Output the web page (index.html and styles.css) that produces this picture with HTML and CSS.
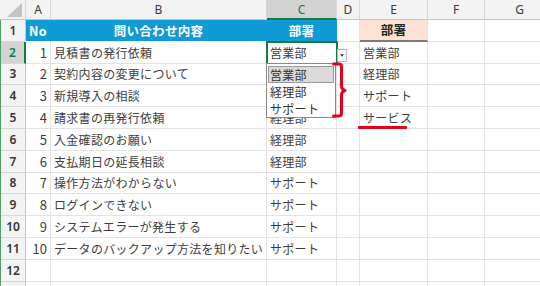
FILE: index.html
```html
<!DOCTYPE html>
<html lang="ja">
<head>
<meta charset="utf-8">
<link rel="stylesheet" href="styles.css">
</head>
<body>
<div class="wrap">
  <div class="sheet">
    <div class="corner"><svg width="24" height="20" viewBox="0 0 24 20"><polygon points="7,17 22,17 22,3" fill="#c4c4c4"/></svg></div>
    <div class="ch">A</div><div class="ch">B</div><div class="ch ch-sel">C</div><div class="ch">D</div><div class="ch">E</div><div class="ch">F</div><div class="ch">G</div>

    <div class="rh">1</div>
    <div class="c hd">No</div><div class="c hd ctr">問い合わせ内容</div><div class="c hd ctr">部署</div><div class="c"></div><div class="c hd2">部署</div><div class="c"></div><div class="c"></div>

    <div class="rh rh-sel">2</div>
    <div class="c num">1</div><div class="c">見積書の発行依頼</div><div class="c sel">営業部</div><div class="c"></div><div class="c">営業部</div><div class="c"></div><div class="c"></div>

    <div class="rh">3</div>
    <div class="c num">2</div><div class="c">契約内容の変更について</div><div class="c"></div><div class="c"></div><div class="c">経理部</div><div class="c"></div><div class="c"></div>

    <div class="rh">4</div>
    <div class="c num">3</div><div class="c">新規導入の相談</div><div class="c"></div><div class="c"></div><div class="c">サポート</div><div class="c"></div><div class="c"></div>

    <div class="rh">5</div>
    <div class="c num">4</div><div class="c">請求書の再発行依頼</div><div class="c">経理部</div><div class="c"></div><div class="c">サービス</div><div class="c"></div><div class="c"></div>

    <div class="rh">6</div>
    <div class="c num">5</div><div class="c">入金確認のお願い</div><div class="c">経理部</div><div class="c"></div><div class="c"></div><div class="c"></div><div class="c"></div>

    <div class="rh">7</div>
    <div class="c num">6</div><div class="c">支払期日の延長相談</div><div class="c">経理部</div><div class="c"></div><div class="c"></div><div class="c"></div><div class="c"></div>

    <div class="rh">8</div>
    <div class="c num">7</div><div class="c">操作方法がわからない</div><div class="c">サポート</div><div class="c"></div><div class="c"></div><div class="c"></div><div class="c"></div>

    <div class="rh">9</div>
    <div class="c num">8</div><div class="c">ログインできない</div><div class="c">サポート</div><div class="c"></div><div class="c"></div><div class="c"></div><div class="c"></div>

    <div class="rh">10</div>
    <div class="c num">9</div><div class="c">システムエラーが発生する</div><div class="c">サポート</div><div class="c"></div><div class="c"></div><div class="c"></div><div class="c"></div>

    <div class="rh">11</div>
    <div class="c num">10</div><div class="c">データのバックアップ方法を知りたい</div><div class="c">サポート</div><div class="c"></div><div class="c"></div><div class="c"></div><div class="c"></div>

    <div class="rh">12</div>
    <div class="c"></div><div class="c"></div><div class="c"></div><div class="c"></div><div class="c"></div><div class="c"></div><div class="c"></div>

    <div class="rh"></div>
    <div class="c"></div><div class="c"></div><div class="c"></div><div class="c"></div><div class="c"></div><div class="c"></div><div class="c"></div>
  </div>

  <div class="dd-btn"><svg width="9" height="5" viewBox="0 0 9 5"><polygon points="2,1 7,1 4.5,4" fill="#444"/></svg></div>
  <div class="dd-list">
    <div class="dd-item dd-hi">営業部</div>
    <div class="dd-item">経理部</div>
    <div class="dd-item">サポート</div>
  </div>
  <svg class="brace" width="16" height="58" viewBox="0 0 16 58">
    <path d="M1.5 2 H7 Q9.5 2 9.5 4.5 V24 Q9.5 27.5 13 28.5 Q9.5 29.5 9.5 33 V51.5 Q9.5 54 7 54 H1.5" fill="none" stroke="#e3001b" stroke-width="3" stroke-linecap="round" stroke-linejoin="round"/>
  </svg>
  <div class="uline"></div>
</div>
</body>
</html>
```

FILE: styles.css
```css
html, body {
  margin: 0;
  padding: 0;
  background: #ffffff;
}
body {
  width: 540px;
  height: 286px;
  overflow: hidden;
  font-family: "Noto Sans CJK JP", "Noto Sans", sans-serif;
}
.wrap {
  position: relative;
  width: 540px;
  height: 286px;
  overflow: hidden;
}
.sheet {
  display: grid;
  grid-template-columns: 25px 25px 216px 70px 23px 68px 57px 70px;
  grid-template-rows: 20px repeat(12, 21.8px) 22px;
  border-left: 1px solid #4e9e6a;
  width: 600px;
}
.corner {
  background: #f3f3f3;
  border-right: 1px solid #d4d4d4;
  border-bottom: 1px solid #c6c6c6;
  box-sizing: border-box;
  margin-left: -1px;
}
.corner svg { display: block; }
.ch {
  background: #f3f3f3;
  border-right: 1px solid #d8d8d8;
  border-bottom: 1px solid #c6c6c6;
  box-sizing: border-box;
  font-size: 12px;
  color: #3a3a3a;
  display: flex;
  align-items: center;
  justify-content: center;
  font-family: "Noto Sans", sans-serif;
}
.ch-sel {
  background: #d3d3d3;
  color: #107c41;
  border-bottom: 2px solid #107c41;
}
.rh {
  background: #f3f3f3;
  border-right: 1px solid #c6c6c6;
  border-bottom: 1px solid #d8d8d8;
  box-sizing: border-box;
  font-size: 12px;
  font-weight: 600;
  color: #333;
  display: flex;
  align-items: center;
  justify-content: center;
  font-family: "Noto Sans", sans-serif;
}
.rh-sel {
  background: #d3d3d3;
  color: #107c41;
  border-right: 2px solid #107c41;
}
.c {
  border-right: 1px solid #e3e3e3;
  border-bottom: 1px solid #e3e3e3;
  box-sizing: border-box;
  font-size: 12px;
  color: #3d3d3d;
  display: flex;
  align-items: center;
  padding-left: 3px;
  white-space: nowrap;
  overflow: visible;
  letter-spacing: 0.3px;
}
.num {
  justify-content: flex-end;
  padding-left: 0;
  padding-right: 3px;
  font-size: 13px;
  letter-spacing: 0;
}
.hd {
  background: #119bd5;
  color: #ffffff;
  font-weight: bold;
  border-right-color: #119bd5;
  border-bottom-color: #ffffff;
  font-size: 12.5px;
}
.ctr {
  justify-content: center;
  padding-left: 0;
}
.hd2 {
  background: #fbe2d5;
  color: #222;
  font-weight: bold;
  justify-content: center;
  padding-left: 0;
  border-bottom: 2px solid #7d7a78;
  font-size: 12.5px;
}
.sel {
  outline: 2px solid #107c41;
  outline-offset: -1px;
}
.dd-btn {
  position: absolute;
  left: 337px;
  top: 49px;
  width: 10px;
  height: 13px;
  border: 1px solid #b8b8b8;
  background: #f7f7f7;
  box-sizing: border-box;
  display: flex;
  align-items: center;
  justify-content: center;
}
.dd-btn svg { display: block; }
.dd-list {
  position: absolute;
  left: 266px;
  top: 63px;
  width: 70px;
  height: 55px;
  background: #ffffff;
  border: 1px solid #8a8a8a;
  box-sizing: border-box;
  padding: 2px 1px 0 1px;
  display: flex;
  flex-direction: column;
  overflow: hidden;
}
.dd-item {
  height: 17px;
  flex: none;
  font-size: 12px;
  color: #333;
  display: flex;
  align-items: center;
  padding-left: 2px;
  letter-spacing: 0.3px;
  box-sizing: border-box;
}
.dd-hi {
  background: #dadada;
  border: 1px solid #9a9a9a;
  padding-left: 1px;
}
.brace {
  position: absolute;
  left: 332px;
  top: 62px;
}
.uline {
  position: absolute;
  left: 358px;
  top: 126px;
  width: 49px;
  height: 3px;
  background: #e3001b;
  border-radius: 1px;
}
```
